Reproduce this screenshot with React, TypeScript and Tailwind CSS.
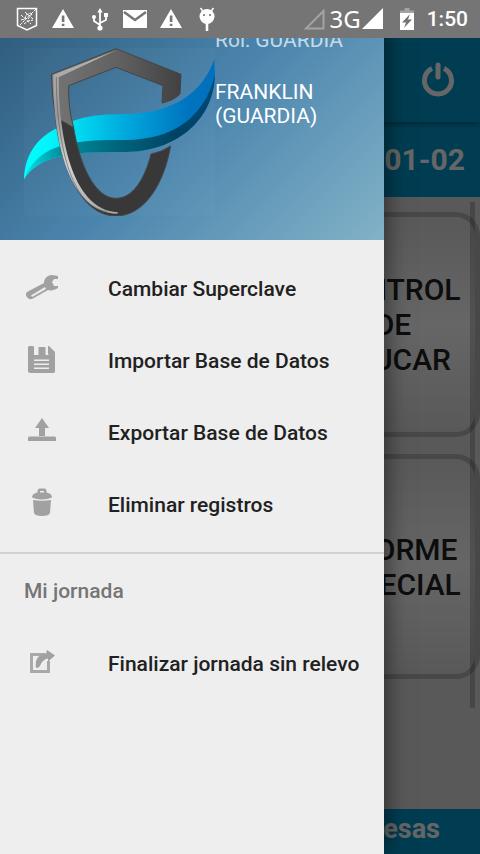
import type { ReactNode } from "react";

function Warning() {
  return (
    <svg className="h-5 w-6" viewBox="0 0 24 20" fill="#fff" aria-hidden="true">
      <path fillRule="evenodd" d="M12 0 23 19H1ZM10.800 6.500V13h2.600V6.500Zm0 8.200v2.400h2.600v-2.400Z" />
    </svg>
  );
}

function StatusBar() {
  return (
    <div className="absolute inset-x-0 top-0 z-30 flex h-[38px] items-center justify-between bg-[#757575] pr-3 pl-4 text-white">
      <div className="flex items-center gap-3">
        <svg className="h-6 w-[22px]" viewBox="0 0 22 24" fill="none" stroke="#fff" aria-hidden="true">
          <path strokeWidth="1.5" d="M1.5 1.5h19v17L11 23 1.5 18.500Z" />
          <path d="M20 2 4 18M5 8l10 9M9 5l8 7M5 13l4-1 1-4 5-2M8 17l4-3 5-1M12 12l4-5" strokeDasharray="3 1" />
        </svg>
        <div className="flex items-center gap-3 pl-px">
          <Warning />
          <svg className="h-6 w-6" viewBox="0 0 24 24" fill="none" stroke="#fff" strokeWidth="1.800" aria-hidden="true">
            <path d="M13 4v17M13 18l-6-4v-4M13 16l6-3V8" />
            <path d="m13 1 2.700 4.500h-5.400Z" fill="#fff" stroke="none" />
            <circle cx="13" cy="21" r="2.600" fill="#fff" stroke="none" />
            <circle cx="7" cy="10" r="2" fill="#fff" stroke="none" />
            <path d="M17 6h4v4h-4z" fill="#fff" stroke="none" />
          </svg>
          <svg className="h-5 w-6" viewBox="0 0 24 20" aria-hidden="true">
            <path d="M0 1h24v18H0z" fill="#fff" />
            <path d="m1 3 11 8 11-8" fill="none" stroke="#757575" strokeWidth="2.500" />
          </svg>
          <Warning />
          <svg className="h-6 w-6" viewBox="0 0 24 24" fill="#fff" aria-hidden="true">
            <path d="m5.500 1 3 4M18.500 1l-3 4" stroke="#fff" strokeWidth="1.500" />
            <path d="M10.700 15h2.600v9h-2.600z" />
            <circle cx="12" cy="9.500" r="7.500" />
            <circle cx="9" cy="8" r="1.100" fill="#757575" />
            <circle cx="15" cy="8" r="1.100" fill="#757575" />
          </svg>
        </div>
      </div>
      <div className="flex items-center">
        <svg className="size-[22px]" viewBox="0 0 22 22" fill="none" stroke="#a3a3a3" strokeWidth="2" aria-hidden="true">
          <path d="M20.500 3v17.500H3Z" />
        </svg>
        <span className="ml-1 font-['Noto_Sans',sans-serif] text-2xl leading-6">3G</span>
        <svg className="size-[22px]" viewBox="0 0 22 22" fill="#fff" aria-hidden="true">
          <path d="M22 0v21H1Z" />
        </svg>
        <svg className="mr-2 ml-3 h-[22px] w-6" viewBox="0 0 24 22" aria-hidden="true">
          <path d="M9.500 0h5v2.500H19v5H5v-5h4.500Z" fill="#a3a3a3" />
          <path d="M5 5h14v17H5z" fill="#fff" />
          <path d="m15 6-8 8.500h4l-2 5.500 8-8.500h-4Z" fill="#757575" />
        </svg>
        <span className="text-[21px] leading-6 font-medium">1:50</span>
      </div>
    </div>
  );
}

function Logo() {
  return (
    <svg className="h-[168px] w-[191px] shrink-0" viewBox="72 36 573 504" role="img" aria-label="Logo">
      <defs>
        <linearGradient id="ribbon" x1="0" x2="1">
          <stop offset="0" stopColor="#0ff" />
          <stop offset=".15" stopColor="#00f4fa" />
          <stop offset=".5" stopColor="#00aee0" />
          <stop offset=".85" stopColor="#0074c0" />
          <stop offset="1" stopColor="#0070bd" />
        </linearGradient>
        <linearGradient id="fold" x1="0" x2="1">
          <stop offset="0" stopColor="#00e5e8" />
          <stop offset=".2" stopColor="#008d9b" />
          <stop offset=".5" stopColor="#00647b" />
          <stop offset=".8" stopColor="#004263" />
          <stop offset="1" stopColor="#004875" />
        </linearGradient>
        <linearGradient id="steel" x1="0" x2="1">
          <stop offset="0" stopColor="#747474" />
          <stop offset=".5" stopColor="#626262" />
          <stop offset="1" stopColor="#414141" />
        </linearGradient>
        <linearGradient id="shine" x1="0" y1="0" x2="0" y2="1">
          <stop offset="0" stopColor="#b5b5b5" />
          <stop offset=".4" stopColor="#989898" />
          <stop offset=".7" stopColor="#d4d4d4" />
          <stop offset="1" stopColor="#aaa" />
        </linearGradient>
      </defs>
      <path d="M72 36h573v504H72z" fill="#fff" fillOpacity=".025" />
      <path d="M72 430C74 350 120 295 185 271C245 235 320 235 380 234C510 230 605 180 643 68L645 120C632 250 520 350 370 348C240 347 120 350 72 430Z" fill="url(#ribbon)" />
      <path d="M72 430C112 325 215 310 375 312C520 312 612 245 645 118C640 260 520 350 370 348C240 347 120 350 72 430Z" fill="url(#fold)" />
      <path d="M348 38 543 115 540 174Q520 194 486 201L489 149 348 94 206 149Q204 215 221 275L190 258 168 250Q155 180 154 115Z" fill="url(#steel)" stroke="#454545" strokeWidth="3" />
      <path d="M188 256 221 276C239 385 284 487 348 487C398 487 434 430 453 354Q485 348 512 330C491 448 431 540 348 540C239 540 182 383 167 250Z" fill="#383838" stroke="#474747" strokeWidth="3" />
      <path d="M348 43 176 124C176 285 210 522 354 529L352 533C194 530 158 280 160 116Z" fill="url(#shine)" />
      <path d="M169 123C169 288 202 510 320 526" fill="none" stroke="#606060" strokeWidth="2" />
    </svg>
  );
}

const icons: Record<string, ReactNode> = {
  wrench: (
    <path
      fillRule="evenodd"
      d="M34 5v3h-4l-2 3 2 4h4v2c-3 2-7 3-10 2L8 28c-4 1-8-4-5-7l17-9c0-5 4-8 8-8ZM7 24.500 8 26l14-8-1-2Z"
    />
  ),
  save: (
    <path
      fillRule="evenodd"
      d="M5 3h4l1 1v8h15l-1-1V3l1 0 6 6v20l-1 1H6l-2-1V4ZM14.500 4h7v8h-7ZM10 16.500V18h15v-1.500Zm0 4V22h15v-1.500Zm0 4V26h15v-1.500Z"
    />
  ),
  upload: <path d="m18 3 7 10h-4v8h-6v-8h-4ZM5 21.500h26l1 1V26H4v-3.500Z" />,
  trash: (
    <path
      fillRule="evenodd"
      d="M13.500 4q0-2.500 2-2.500h5q2 0 2 2.500v1.500q5.500 1 5.500 5-4 2-10 2t-10-2q0-4 5.500-5ZM16 4v1.500h4V4ZM9 13q9 1.500 18 0l-1 13q-1 3-8 3t-8-3Z"
    />
  ),
  share: (
    <>
      <path d="M21 8.500H7.500v17h17V15" fill="none" stroke="#a9a9a9" strokeWidth="3" />
      <path d="m23 4 8 5.500-7 6v-3q-6 1-8 7.500-1 2-4 2-2-13 10-14.500Z" />
    </>
  ),
};

function Item({ icon, children }: { icon: string; children: ReactNode }) {
  return (
    <li>
      <button type="button" className="flex h-[72px] w-full items-center gap-12 px-6 text-left">
        <svg className="size-9 shrink-0" viewBox="0 0 36 36" fill="#a1a1a1" aria-hidden="true">
          {icons[icon]}
        </svg>
        {children}
      </button>
    </li>
  );
}

function Drawer() {
  return (
    <aside className="absolute inset-y-0 left-0 z-20 w-4/5 bg-[#eee] text-[21px] leading-6 font-medium text-[#212121] shadow-[0_0_24px_rgba(0,0,0,0.6)]">
      <header className="flex h-60 items-end bg-linear-[135deg,#2c5878,#4a84ad_50%,#82b2c7] px-6 pb-6 font-normal text-white">
        <Logo />
        <div className="h-[188px] whitespace-pre-line">
          <p className="text-white/70">Rol: GUARDIA</p>
          <p className="mt-7">{"FRANKLIN\n(GUARDIA)"}</p>
        </div>
      </header>
      <nav aria-label="Menú">
        <ul className="pt-[13px] pb-[11px]">
          <Item icon="wrench">Cambiar Superclave</Item>
          <Item icon="save">Importar Base de Datos</Item>
          <Item icon="upload">Exportar Base de Datos</Item>
          <Item icon="trash">Eliminar registros</Item>
        </ul>
        <hr className="border-t-2 border-[#d1d1d1]" />
        <h2 className="flex h-[74px] items-center px-6 text-[#757575]">Mi jornada</h2>
        <ul>
          <Item icon="share">Finalizar jornada sin relevo</Item>
        </ul>
      </nav>
    </aside>
  );
}

function Card({ children }: { children: ReactNode }) {
  return (
    <button
      type="button"
      className="flex h-[225px] w-[174px] items-center justify-center rounded-3xl border-[5px] border-[#b4b4b4] bg-linear-to-b from-[#dedede] via-white to-[#dedede] text-center text-3xl leading-[35px] font-medium whitespace-pre-line text-[#212121]"
    >
      {children}
    </button>
  );
}

export default function App() {
  return (
    <div className="relative flex min-h-screen flex-col overflow-hidden bg-[#dedede] pt-[38px] font-[Roboto,sans-serif]">
      <StatusBar />
      <header className="z-1 flex h-[84px] items-center justify-end bg-[#009acd] px-6 shadow-[0_2px_6px_rgba(0,0,0,0.4)]">
        <button type="button" aria-label="Salir">
          <svg className="size-9" viewBox="0 0 36 36" fill="none" stroke="#fff" strokeWidth="5" aria-hidden="true">
            <path d="M12 6.500a13.500 13.500 0 1 0 12 0" />
            <path d="M18 3v12" strokeLinecap="round" />
          </svg>
        </button>
      </header>
      <div className="flex h-[75px] items-center justify-end bg-[#009acd] px-[15px] text-3xl font-bold text-white">01-02</div>
      <main className="relative flex grow flex-col items-end gap-[17px] pt-[15px]">
        <Card>{"CONTROL\nDE\nAZUCAR"}</Card>
        <Card>{"INFORME\nESPECIAL"}</Card>
        <div className="absolute top-[5px] right-[5px] h-[506px] w-[5px] bg-black/20" />
      </main>
      <footer className="flex h-[45px] justify-end bg-[#009acd] px-10 text-[27px] leading-10 font-bold text-white">esas</footer>
      <div className="absolute inset-0 z-10 bg-black/60" />
      <Drawer />
    </div>
  );
}
